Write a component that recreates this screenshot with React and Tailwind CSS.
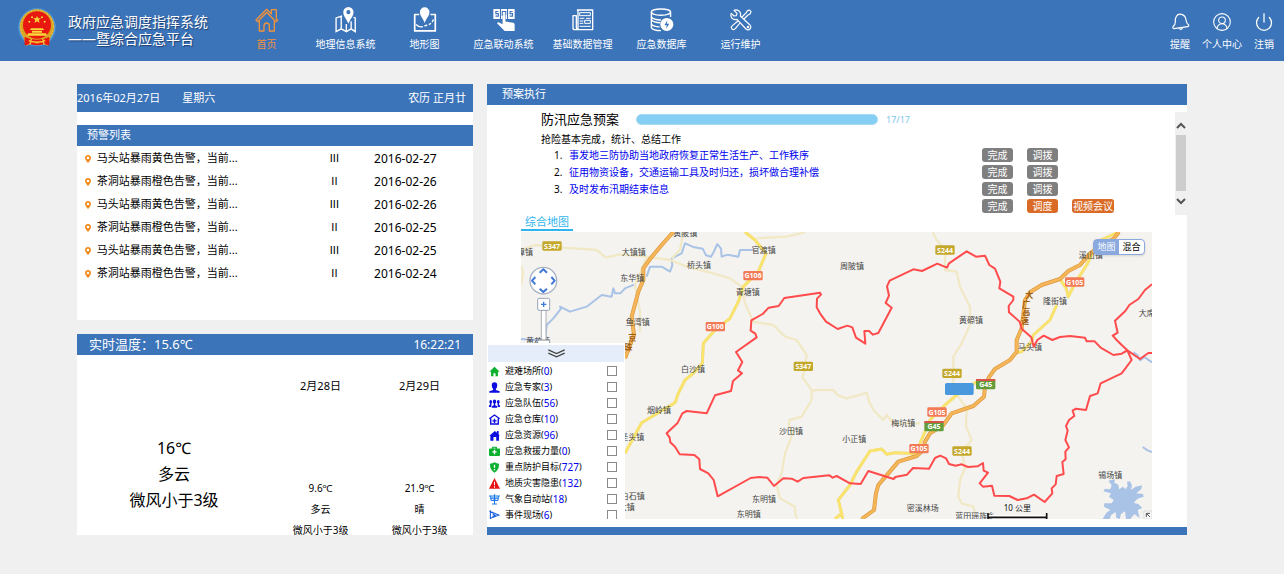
import React, { useState } from 'react';
import { CircleUserRound, Power } from 'lucide-react';

const HomeIcon = () => (
  <svg viewBox="0 0 72 72" className="w-6 h-6" fill="none" stroke="currentColor" strokeWidth="4" strokeLinejoin="round">
    <path d="M3 36 35 4 49 18V5h15v28l4 4-5 4-28-28L8 41z" />
    <path d="M13 38v31h14V52q1-7 8-7t8 7v17h15V38" />
  </svg>
);

const MapPinIcon = () => (
  <svg viewBox="0 0 66 76" className="w-6 h-[26px]" fill="none" stroke="currentColor" strokeWidth="4">
    <path d="M22 26 4 32v40l15-8 15 8 14-8 12 8V32l-5-2M19 28v36M34 50v22M48 42v22" />
    <path d="M40 0a15 15 0 0 1 15 15c0 11-9 18-15 34C34 33 25 26 25 15A15 15 0 0 1 40 0zm0 9a6 6 0 1 0 0 12 6 6 0 0 0 0-12z" fill="currentColor" stroke="none" />
  </svg>
);

const TerrainIcon = () => (
  <svg viewBox="0 0 70 74" className="w-6 h-[26px]" fill="none" stroke="currentColor" strokeWidth="5">
    <path d="M18 21H5v48h60V21H51" strokeLinejoin="round" />
    <path d="M9 50q10 10 20 6" strokeWidth="4" />
    <path d="M33 54q22-2 28-22" strokeWidth="4" strokeDasharray="8 5" />
    <path d="M34 0a14 14 0 0 1 14 14c0 12-9 17-14 32-5-15-14-20-14-32A14 14 0 0 1 34 0z" fill="currentColor" stroke="none" />
  </svg>
);

const SosIcon = () => (
  <svg viewBox="0 0 62 66" className="w-[22px] h-6" fill="currentColor">
    <path d="M1 2h60v28H36V18h-9v12H1z" />
    <g fill="none" stroke="#3a70bb" strokeWidth="3">
      <path d="M15 9H8v6h7v7H7M55 9h-7v6h7v7h-8M26 22V9h10v9M21 2v28M41 2v28" />
    </g>
    <path d="M27 20q4-4 8 0v17l22 4q4 1 4 6v17H33L12 43q-1-4 4-4l11 6z" />
  </svg>
);

const NewsIcon = () => (
  <svg viewBox="0 0 66 66" className="w-[22px] h-6" fill="none" stroke="currentColor" strokeWidth="4">
    <path d="M16 3h46v59H8q-5 0-5-6V20h10v36q0 5 5 5V3z" strokeLinejoin="round" />
    <path d="M23 11h32v9H23zM23 28h14M42 28h14M23 36h11M38 34h17v9H38zM23 43h11M23 52h33" strokeWidth="3" />
  </svg>
);

const DatabaseIcon = () => (
  <svg viewBox="0 0 70 70" className="w-6 h-6" fill="none" stroke="currentColor" strokeWidth="4">
    <ellipse cx="32" cy="12" rx="28" ry="9" />
    <path d="M4 12v45q5 9 28 9M60 12v14M4 26q6 9 28 9M4 34q6 9 26 9M4 47q6 8 24 8" />
    <circle cx="49" cy="48" r="19" fill="currentColor" stroke="none" />
    <path d="m51 36-9 14h7l-2 11 9-15h-7z" fill="#3a70bb" stroke="none" />
  </svg>
);

const ToolsIcon = () => (
  <svg viewBox="0 0 66 66" className="w-[22px] h-6" fill="none" stroke="currentColor" strokeWidth="3.5" strokeLinejoin="round">
    <path d="M12 4 21 13 19 20 12 21 4 13Q0 23 8 29q6 4 13 2l27 29q6 5 12 0 5-6 0-12L31 21Q34 12 27 6 20 1 12 4z" />
    <path d="M36 24 49 11 52 5 59 3 63 8 60 15 54 18 42 30M30 42 16 59q-5 5-10 1-5-6 1-10l17-14" />
    <circle cx="54" cy="54" r="2" />
  </svg>
);

const BellIcon = () => (
  <svg viewBox="0 0 60 60" className="w-5 h-5" fill="none" stroke="currentColor" strokeWidth="3.5" strokeLinejoin="round">
    <path d="M19 13Q24 5 34 7q13 3 14 17 1 9 8 15 1 5-3 5L12 50q-5-2-3-6 7-5 7-14-1-11 3-17z" />
    <path d="M28 49q4 7 10-1" />
  </svg>
);

const Emblem = () => (
  <svg viewBox="0 0 114 118" className="w-[38px] h-10 shrink-0">
    <ellipse cx="57" cy="57" rx="56" ry="57" fill="#62b5f0" opacity="0.6" />
    <ellipse cx="57" cy="55" rx="52" ry="52" fill="#d9a321" />
    <path d="M16 88h82l-8 24-14-4H38l-14 4z" fill="#d9a321" />
    <ellipse cx="57" cy="50" rx="42" ry="41" fill="#e8170f" />
    <ellipse cx="57" cy="55" rx="49" ry="49" fill="none" stroke="#f4d55a" strokeWidth="3" strokeDasharray="5 5" />
    <path d="m57 22 3 8h9l-7 5 3 9-8-5-8 5 3-9-7-5h9z" fill="#f8d83a" />
    <g fill="#f8d83a">
      <circle cx="34" cy="40" r="3" />
      <circle cx="42" cy="27" r="3" />
      <circle cx="72" cy="27" r="3" />
      <circle cx="80" cy="40" r="3" />
      <path d="M40 60h34l5 5H35zM42 67h30v6H42zM30 75h54l3 7H27z" />
    </g>
    <path d="M20 86q16 8 37 8t37-8v25q-10-1-14-5-10 5-23 5t-23-5q-4 4-14 5z" fill="#e8170f" />
    <path d="M32 97q25 9 50 0M40 91l-4 17M74 91l4 17M50 103h14" stroke="#f4c93a" strokeWidth="4" fill="none" />
  </svg>
);

const navItems = [
  { label: '首页', icon: HomeIcon, active: true },
  { label: '地理信息系统', icon: MapPinIcon },
  { label: '地形图', icon: TerrainIcon },
  { label: '应急联动系统', icon: SosIcon },
  { label: '基础数据管理', icon: NewsIcon },
  { label: '应急数据库', icon: DatabaseIcon },
  { label: '运行维护', icon: ToolsIcon },
];

const warnings = [
  { text: '马头站暴雨黄色告警，当前...', level: 'III', date: '2016-02-27' },
  { text: '茶洞站暴雨橙色告警，当前...', level: 'II', date: '2016-02-26' },
  { text: '马头站暴雨黄色告警，当前...', level: 'III', date: '2016-02-26' },
  { text: '茶洞站暴雨橙色告警，当前...', level: 'II', date: '2016-02-25' },
  { text: '马头站暴雨黄色告警，当前...', level: 'III', date: '2016-02-25' },
  { text: '茶洞站暴雨橙色告警，当前...', level: 'II', date: '2016-02-24' },
];

const forecast = [
  { day: '2月28日', temp: '9.6℃', sky: '多云', wind: '微风小于3级' },
  { day: '2月29日', temp: '21.9℃', sky: '晴', wind: '微风小于3级' },
];

const tasks = [
  '事发地三防协助当地政府恢复正常生活生产、工作秩序',
  '征用物资设备，交通运输工具及时归还，损坏做合理补偿',
  '及时发布汛期结束信息',
];

// Legend icons, 32 x 32 each
const layers = [
  { name: '避难场所', count: 0, icon: <path fill="#0cb02f" d="M16 2 31 17h-5v13h-7v-9h-6v9H6V17H1z" /> },
  { name: '应急专家', count: 3, icon: <path fill="#0d0de0" d="M16 1q8 0 8 9 0 6-4 10v3l11 4v4H1v-4l11-4v-3q-4-4-4-10 0-9 8-9z" /> },
  {
    name: '应急队伍',
    count: 56,
    icon: <path fill="#0d0de0" d="M16 4q5 0 5 6 0 4-3 7v4l6 3v4H8v-4l6-3v-4q-3-3-3-7 0-6 5-6zM5 6q4 0 4 5 0 3-2 5v5l-1 5H0v-4l3-3v-3q-2-2-2-5 0-5 4-5zM27 6q4 0 4 5 0 3-2 5v3l3 3v4h-6l-1-5v-5q-2-2-2-5 0-5 4-5z" />,
  },
  {
    name: '应急仓库',
    count: 10,
    icon: (
      <g fill="none" stroke="#0d0de0" strokeWidth="4">
        <path d="M1 14 16 3l15 11M5 13v16h22V13M16 14v12M10 20h12" />
      </g>
    ),
  },
  { name: '应急资源', count: 96, icon: <path fill="#0d0de0" d="M1 17 17 3l6 5V3h5v9l3 5h-2v14h-8V20h-8v11H4V17z" /> },
  {
    name: '应急救援力量',
    count: 0,
    icon: (
      <g>
        <path fill="#0cb02f" d="M9 7V2h14v5h6q3 0 3 3v16q0 3-3 3H3q-3 0-3-3V10q0-3 3-3zm4 0h6V5h-6z" />
        <path stroke="#fff" strokeWidth="4" d="M16 11v13M10 17h12" />
      </g>
    ),
  },
  {
    name: '重点防护目标',
    count: 727,
    icon: (
      <g>
        <path fill="#0cb02f" d="M16 1q6 4 13 4 1 18-13 26Q2 23 3 5q7 0 13-4z" />
        <path stroke="#fff" strokeWidth="4" d="M16 8v9M16 20v4" />
      </g>
    ),
  },
  {
    name: '地质灾害隐患',
    count: 132,
    icon: (
      <g>
        <path fill="#e81414" d="M16 0 32 31H0z" />
        <path stroke="#fff" strokeWidth="3" d="M16 11v10M16 24v4" />
      </g>
    ),
  },
  {
    name: '气象自动站',
    count: 18,
    icon: (
      <g fill="none" stroke="#1878e8" strokeWidth="3">
        <path d="M0 6h32M5 7v5q0 7 5 7 6 0 6-7 0 7 6 7 5 0 5-7V7M5 12h22M16 1v29M9 29h14" />
      </g>
    ),
  },
  {
    name: '事件现场',
    count: 6,
    icon: (
      <g fill="none" stroke="#1a5ee0" strokeWidth="3">
        <path d="M4 1v30M1 3l28 12L4 24M10 11l8 5-8 3" />
      </g>
    ),
  },
];

const places = [
  ['樟镇', 12, 70],
  ['大镇镇', 338, 70],
  ['黄陂镇', 493, 13],
  ['官渡镇', 728, 64],
  ['桥头镇', 534, 107],
  ['东华镇', 334, 148],
  ['青塘镇', 680, 190],
  ['鱼湾镇', 350, 280],
  ['黄花镇', 51, 337],
  ['白沙镇', 516, 419],
  ['烟岭镇', 414, 542],
  ['圣头镇', 334, 625],
  ['白石镇', 335, 801],
  ['大镇', 317, 834],
  ['沙田镇', 810, 605],
  ['小正镇', 1000, 629],
  ['梅坑镇', 1147, 583],
  ['东明镇', 729, 809],
  ['东明镇', 683, 854],
  ['周陂镇', 993, 112],
  ['黄磜镇', 1350, 274],
  ['溪山镇', 1709, 77],
  ['隆街镇', 1602, 216],
  ['大席镇', 1889, 252],
  ['马头镇', 1527, 354],
  ['密溪林场', 1205, 836],
  ['蓝田瑶族乡', 1363, 860],
  ['锡场镇', 1768, 739],
];

const badges = [
  ['S347', 93, 42],
  ['S347', 847, 403],
  ['S244', 1272, 54],
  ['S244', 1293, 424],
  ['S244', 1323, 657],
  ['G106', 696, 131],
  ['G106', 583, 284],
  ['G105', 1661, 150],
  ['G105', 1248, 540],
  ['G105', 1194, 650],
  ['G45', 1394, 458],
  ['G45', 1239, 584],
];

const badgeColor = (code) =>
  code.startsWith('S') ? '#c3a82b' : // provincial road
  code === 'G45' ? '#639c3a' : // expressway
  '#f27a56'; // national road

const localRoads = [
  'M0 54 42 39 127 47 227 54 255 77 297 67 377 74 447 84 497 104 577 124 627 139 662 164 672 214 697 269 757 279 792 314 827 324 857 369 845 439 850 444 872 474 872 504 842 554 805 564 803 580 815 604 792 664 782 724 767 759 777 799 822 824 822 844 829 861',
  'M875 479 880 474 937 474 950 490 977 499 1020 488 1037 482 1045 510 1057 534 1087 564 1097 549 1117 574 1197 574',
  'M707 19 797 14 852 1M487 0 477 54 452 79M377 74 342 159 357 239 357 299M0 100 6 120 0 160',
  'M1235 0 1247 24 1272 54 1272 114 1307 119 1317 164 1347 224 1347 279 1322 334 1297 374 1297 449 1292 474 1312 494 1337 529 1335 584 1352 624 1322 659 1332 709 1317 744 1312 794 1322 814 1357 824 1362 844',
];

const mainRoads = [
  'M672 0 702 24 735 64 712 119 667 164 652 209 627 259 582 294 547 334 544 394 517 424 492 444 472 484 462 512 417 539 362 572 312 664',
  'M1792 0 1740 24 1727 39 1697 99 1662 154 1642 194 1636 170 1619 144M1607 219 1587 264 1537 309 1532 329 1502 359 1487 362M1400 446 1367 449 1307 489 1272 519 1227 564 1197 634 1187 668 1162 664 1122 662 1097 667 1082 651 1047 657 1007 719 987 759 952 804 962 844 965 861M962 844 942 861',
];

const expressways = [
  'M457 0 422 39 387 81 367 109 367 144 352 179 332 254 339 309 312 379',
  'M1794 0 1777 21 1750 34 1707 64 1677 99 1642 117 1617 141 1562 159 1529 179 1512 204 1502 289 1487 324 1487 359 1467 384 1422 411 1405 434 1392 464 1389 494 1357 522 1292 544 1267 579 1227 604 1212 629 1207 654 1187 672 1132 689 1102 724 1072 759 1065 784 1059 834 1022 861',
];

const rivers = [
  'M697 54H657L652 74 620 68 602 74 600 50 589 36 578 60 570 74 555 70 545 50 520 46 492 34 482 64 452 79 454 100 447 119 422 104 387 104 377 134M342 157 312 169 298 184 282 184 277 169 272 194 242 189 197 224 147 239 117 224 120 230 97 259 77 279 72 324 42 324 0 321',
  'M1837 361 1850 370 1857 385 1870 375 1893 391M1865 645 1880 655 1893 660',
];

const boundary = [
  'M1893 157 1872 174 1852 201 1825 219 1813 237 1782 266 1790 302 1775 311 1787 324 1802 339 1819 355 1857 381 1882 363 1893 363',
  'M1819 355 1802 365 1777 369 1739 347 1721 328 1697 328 1692 317 1647 312 1617 315 1594 324 1568 311 1549 324 1538 344 1531 316 1502 290 1496 269 1464 241 1463 222 1477 204 1477 194 1435 169 1438 149 1422 110 1405 99 1392 71 1365 74 1337 58 1284 94 1278 107 1249 95 1203 117 1177 112 1106 146 1098 163 1104 191 1094 213 1112 227 1072 303 1056 308 1044 297 1030 297 1033 335 1005 317 994 286 979 281 950 291 915 269 897 244 887 226 888 200 900 188 897 182 790 198 773 222 743 227 725 246 691 265 689 296 703 305 707 316 645 360 664 390 651 415 663 424 636 447 630 477 582 490 557 544 497 537 484 544 469 574 437 604 446 617 448 631 462 644 476 667 520 669 535 682 537 711 562 724 578 744 590 793 689 738 715 735 739 737 759 762 787 739 812 740 830 749 847 738 925 730 935 737 947 732 987 754 1019 756 1042 717 1118 741 1123 735 1158 728 1176 708 1224 710 1242 678 1258 671 1275 679 1284 696 1304 701 1322 697 1341 705 1370 703 1386 693 1388 716 1401 722 1376 754 1386 764 1413 761 1420 791 1465 792 1490 804 1517 799 1539 788 1571 810 1594 784 1592 769 1604 757 1607 732 1628 726 1624 690 1634 682 1633 659 1644 646 1633 624 1640 596 1635 582 1644 564 1660 552 1655 536 1665 530 1695 534 1707 492 1730 484 1739 454 1802 424 1832 384 1819 355',
];

const CountyMap = () => (
  <svg
    viewBox="0 0 1893 861"
    preserveAspectRatio="xMidYMid slice"
    className="block w-full h-[287px] bg-[#f4f3f0]"
    fill="none"
    strokeLinejoin="round"
    fontFamily="'Noto Sans', 'Noto Sans CJK SC', sans-serif"
  >
    {rivers.map((d) => <path key={d} d={d} stroke="#a9c3e6" strokeWidth="6" />)}
    {/* reservoir */}
    <path
      d="M1762 746 1782 742 1780 752 1792 758 1794 772 1806 764 1814 772 1820 762 1818 750 1827 748 1833 760 1830 774 1844 764 1864 760 1860 772 1846 784 1866 786 1868 794 1850 800 1838 812 1852 816 1864 828 1850 834 1856 858 1840 846 1828 861 1815 861 1812 838 1800 846 1796 861 1786 858 1784 840 1770 850 1766 861 1745 861 1756 842 1768 834 1749 824 1750 814 1772 814 1778 804 1764 794 1770 784 1747 778 1752 770 1768 772 1772 760z"
      fill="#a9c3e6"
    />
    {localRoads.map((d) => <path key={d} d={d} stroke="#f1e9c6" strokeWidth="7" />)}
    {mainRoads.map((d) => (
      <g key={d}>
        <path d={d} stroke="#ecd77a" strokeWidth="9" />
        <path d={d} stroke="#fbe46c" strokeWidth="7" />
      </g>
    ))}
    {expressways.map((d) => (
      <g key={d}>
        <path d={d} stroke="#d99a45" strokeWidth="12" />
        <path d={d} stroke="#f6b556" strokeWidth="8" />
      </g>
    ))}

    {places.map(([name, x, y]) => (
      <text key={`${name}${y}`} x={x} y={y} fontSize="24" textAnchor="middle" fill="#444">{name}</text>
    ))}
    <g fontSize="24" fontWeight="bold" textAnchor="middle" fill="#9a5a10">
      <text x="1525" y="198">大</text>
      <text x="1516" y="224">广</text>
      <text x="1516" y="250">高</text>
      <text x="1512" y="276">速</text>
      <text x="334" y="328">京</text>
      <text x="322" y="354">珠</text>
    </g>

    {boundary.map((d) => <path key={d} d={d} stroke="#ff4b4b" strokeWidth="6" />)}

    {badges.map(([code, x, y]) => (
      <g key={`${code}${x}`}>
        <rect x={x - 29} y={y - 14} width="58" height="28" rx="4" fill={badgeColor(code)} />
        {code === 'G45' && <rect x={x - 29} y={y - 17} width="58" height="6" fill="#d9534a" />}
        <text x={x} y={y + 8} fontSize="21" fontWeight="bold" textAnchor="middle" fill="#fff">{code}</text>
      </g>
    ))}
    <rect x="1272" y="453" width="86" height="36" rx="5" fill="#4998dd" />

    {/* pan and zoom control */}
    <circle cx="67" cy="146" r="40" fill="#fff" stroke="#a9b2c3" strokeWidth="4" />
    <path d="M56 122 67 112 78 122M56 170 67 180 78 170M43 135 33 146 43 157M91 135 101 146 91 157" stroke="#3f78d6" strokeWidth="6" />
    <rect x="61" y="234" width="14" height="98" fill="#fff" stroke="#a9adb5" strokeWidth="3" />
    <rect x="50" y="199" width="36" height="36" rx="4" fill="#fff" stroke="#9aa3b5" strokeWidth="3" />
    <path d="M60 217h16M68 209v16" stroke="#3f78d6" strokeWidth="4" />
    <rect x="50" y="324" width="36" height="14" rx="4" fill="#fff" stroke="#888" strokeWidth="3" />

    {/* scale */}
    <path d="M1401 853h176" stroke="#fff" strokeWidth="8" />
    <path d="M1401 843v18M1577 843v18M1401 856h176" stroke="#111" strokeWidth="5" />
    <text x="1489" y="837" fontSize="24" textAnchor="middle" fill="#111">10 公里</text>
    <rect x="1869" y="837" width="24" height="24" fill="#f8f8f8" stroke="#ccc" strokeWidth="2" />
    <path d="M1876 855v-11h11M1876 844l11 11" stroke="#555" strokeWidth="3" />
  </svg>
);

const TaskButton = ({ children, orange, wide }) => (
  <button
    className={`h-3.5 rounded-[3px] text-[10px] leading-[14px] text-white text-center whitespace-nowrap ${wide ? 'w-[42px]' : 'w-[31px]'} ${orange ? 'bg-[#d96b27]' : 'bg-[#7f7f7f]'}`}
  >
    {children}
  </button>
);

const Header = () => (
  <header className="flex items-start h-[61px] bg-[#3c74b9] text-white">
    <div className="flex items-start w-[227px] pl-[18px] pt-2 shrink-0">
      <Emblem />
      <h1 className="ml-3 pt-[5px] text-[14px] leading-[17px] whitespace-nowrap [text-shadow:1px_1px_1px_#1d3f73]">
        政府应急调度指挥系统
        <br />
        ——暨综合应急平台
      </h1>
    </div>
    <nav className="flex pt-[7px]">
      {navItems.map(({ label, icon: Icon, active }) => (
        <a
          key={label}
          href="#"
          className={`flex flex-col items-center w-[79px] text-[10px] leading-[14px] whitespace-nowrap ${active ? 'text-[#f2923a]' : 'text-white'}`}
        >
          <span className="flex items-center justify-center h-[26px] mb-1">
            <Icon />
          </span>
          {label}
        </a>
      ))}
    </nav>
    <div className="flex gap-3 ml-auto pr-2.5 pt-3 text-[10px] leading-[14px] whitespace-nowrap">
      <a href="#" className="flex flex-col items-center gap-[5px]"><BellIcon />提醒</a>
      <a href="#" className="flex flex-col items-center gap-[5px]"><CircleUserRound className="w-5 h-5" strokeWidth={1.3} />个人中心</a>
      <a href="#" className="flex flex-col items-center gap-[5px]"><Power className="w-5 h-5" strokeWidth={1.5} />注销</a>
    </div>
  </header>
);

const WarningPanel = () => (
  <section className="bg-white h-[236px]">
    <div className="flex items-center h-7 bg-[#3c74b9] pr-[7px] text-[11px] text-white">
      <span>2016年02月27日</span>
      <span className="ml-[22px]">星期六</span>
      <span className="ml-auto">农历 正月廿</span>
    </div>
    <h2 className="flex items-center h-[21px] mt-[13px] pl-2.5 bg-[#3c74b9] text-[11px] text-white">预警列表</h2>
    <table className="w-full mt-px table-fixed text-[11px]">
      <colgroup>
        <col className="w-[5%]" />
        <col className="w-[52%]" />
        <col className="w-[16%]" />
        <col className="w-[27%]" />
      </colgroup>
      <tbody>
        {warnings.map((w, i) => (
          <tr key={i} className="h-[23px]">
            <td className="pl-2">
              <svg viewBox="0 0 18 24" className="block w-1.5 h-2">
                <path fillRule="evenodd" fill="#f08a1c" d="M9 0q9 1 9 9 0 5-9 15Q0 14 0 9q0-8 9-9zm0 5a4 4 0 1 0 0 8 4 4 0 0 0 0-8z" />
              </svg>
            </td>
            <td className="whitespace-nowrap">{w.text}</td>
            <td className="text-center font-['Liberation_Sans',sans-serif]">{w.level}</td>
            <td className="pl-2 text-[12px]">{w.date}</td>
          </tr>
        ))}
      </tbody>
    </table>
  </section>
);

const WeatherPanel = () => (
  <section className="bg-white h-[201px] overflow-hidden">
    <div className="flex items-center justify-between h-[21px] bg-[#3c74b9] pl-3 pr-3 text-white">
      <h2 className="text-[13px]">实时温度：15.6℃</h2>
      <span className="text-[12px]">16:22:21</span>
    </div>
    <div className="grid grid-cols-[49fr_25fr_25fr_1fr] text-center">
      <div className="pt-20 text-[16px] leading-[26px]">
        <p>16℃</p>
        <p>多云</p>
        <p>微风小于3级</p>
      </div>
      {forecast.map((f) => (
        <div key={f.day} className="pt-5 text-[10px] leading-[21px]">
          <p className="mb-[82px] text-[11px]">{f.day}</p>
          <p>{f.temp}</p>
          <p>{f.sky}</p>
          <p>{f.wind}</p>
        </div>
      ))}
    </div>
  </section>
);

const PlanDetail = () => (
  <div className="flex h-[103px] mt-[7px] text-[10px]">
    <div className="flex-1 pl-[54px]">
      <div className="flex items-center h-[15px]">
        <h3 className="text-[13px] whitespace-nowrap">防汛应急预案</h3>
        <div className="w-[242px] h-[11px] ml-[17px] rounded-full bg-[#85cff5] border border-[#a9d8f2]" />
        <span className="ml-2 text-[9px] text-[#7cc8ee]">17/17</span>
      </div>
      <p className="h-5 pt-1 leading-[17px]">抢险基本完成，统计、总结工作</p>
      <ol className="list-decimal pl-6 leading-[17px]">
        {tasks.map((t) => (
          <li key={t} className="pl-1"><a href="#" className="text-[#0000ee] whitespace-nowrap">{t}</a></li>
        ))}
      </ol>
    </div>
    <div className="w-[193px] pt-9">
      {tasks.map((t) => (
        <div key={t} className="flex gap-3.5 h-[17px]">
          <TaskButton>完成</TaskButton>
          <TaskButton>调拨</TaskButton>
        </div>
      ))}
      <div className="flex gap-3.5 h-[17px]">
        <TaskButton>完成</TaskButton>
        <TaskButton orange>调度</TaskButton>
        <TaskButton orange wide>视频会议</TaskButton>
      </div>
    </div>
    <div className="flex flex-col items-center justify-between w-3 py-2.5 bg-[#f0f0f0]">
      <svg viewBox="0 0 10 7" className="w-2.5 h-[7px]" fill="none" stroke="#555" strokeWidth="2"><path d="M1 6 5 2l4 4" /></svg>
      <div className="w-2.5 h-14 mb-0.5 bg-[#cdcdcd]" />
      <svg viewBox="0 0 10 7" className="w-2.5 h-[7px]" fill="none" stroke="#555" strokeWidth="2"><path d="m1 1 4 4 4-4" /></svg>
    </div>
  </div>
);

const LayerList = () => {
  const [checked, setChecked] = useState({});

  return (
    <div className="absolute left-0 bottom-0 w-[138px] h-[176px] overflow-hidden bg-white">
      <button className="flex items-center justify-center w-[136px] h-[17px] mt-0.5 ml-px bg-[#e4edf9]" aria-label="收起图层列表">
        <svg viewBox="0 0 52 26" className="w-[17px] h-[9px]" fill="none" stroke="#444" strokeWidth="4">
          <path d="m1 2 25 11L51 2M1 12l25 11 25-11" />
        </svg>
      </button>
      <ul className="pt-px">
        {layers.map(({ name, count, icon }) => (
          <li key={name}>
            <label className="flex items-center h-4 pl-0.5 pr-2 text-[9px] whitespace-nowrap">
              <svg viewBox="0 0 32 32" className="w-[11px] h-[11px] mr-[5px]">{icon}</svg>
              {name}(<span className="text-[10px] text-[#0000ee]">{count}</span>)
              <input
                type="checkbox"
                className="appearance-none w-2.5 h-2.5 ml-auto border border-[#8a8a8a] bg-white checked:bg-[#3c74b9]"
                checked={!!checked[name]}
                onChange={(e) => setChecked({ ...checked, [name]: e.target.checked })}
              />
            </label>
          </li>
        ))}
      </ul>
    </div>
  );
};

const App = () => (
  <div className="min-h-screen bg-[#f0f0f0] text-black font-['Noto_Sans','Noto_Sans_CJK_SC',sans-serif]">
    <Header />
    <main className="grid grid-cols-[396fr_700fr] gap-3.5 pt-[23px] pb-[39px] pl-[77px] pr-[97px]">
      <div className="flex flex-col gap-3.5">
        <WarningPanel />
        <WeatherPanel />
      </div>
      <section className="bg-white">
        <h2 className="flex items-center h-[21px] pl-[15px] bg-[#3c74b9] text-[11px] text-white">预案执行</h2>
        <PlanDetail />
        <div className="flex h-[17px] pl-[34px] pb-px">
          <a href="#" className="px-1 border-b-2 border-[#2fb4ee] text-[11px] leading-[14px] text-[#2fb4ee]">综合地图</a>
        </div>
        <div className="relative pl-[34px] pr-[35px]">
          <CountyMap />
          <div className="absolute top-[7px] right-[42px] flex h-4 rounded-sm border border-[#8aa9df] bg-white shadow text-[9px] leading-[14px]">
            <button className="w-[25px] bg-[#8aa9df] text-white">地图</button>
            <button className="w-[25px]">混合</button>
          </div>
          <LayerList />
        </div>
        <div className="h-2 mt-2 bg-[#3c74b9]" />
      </section>
    </main>
  </div>
);

export default App;
